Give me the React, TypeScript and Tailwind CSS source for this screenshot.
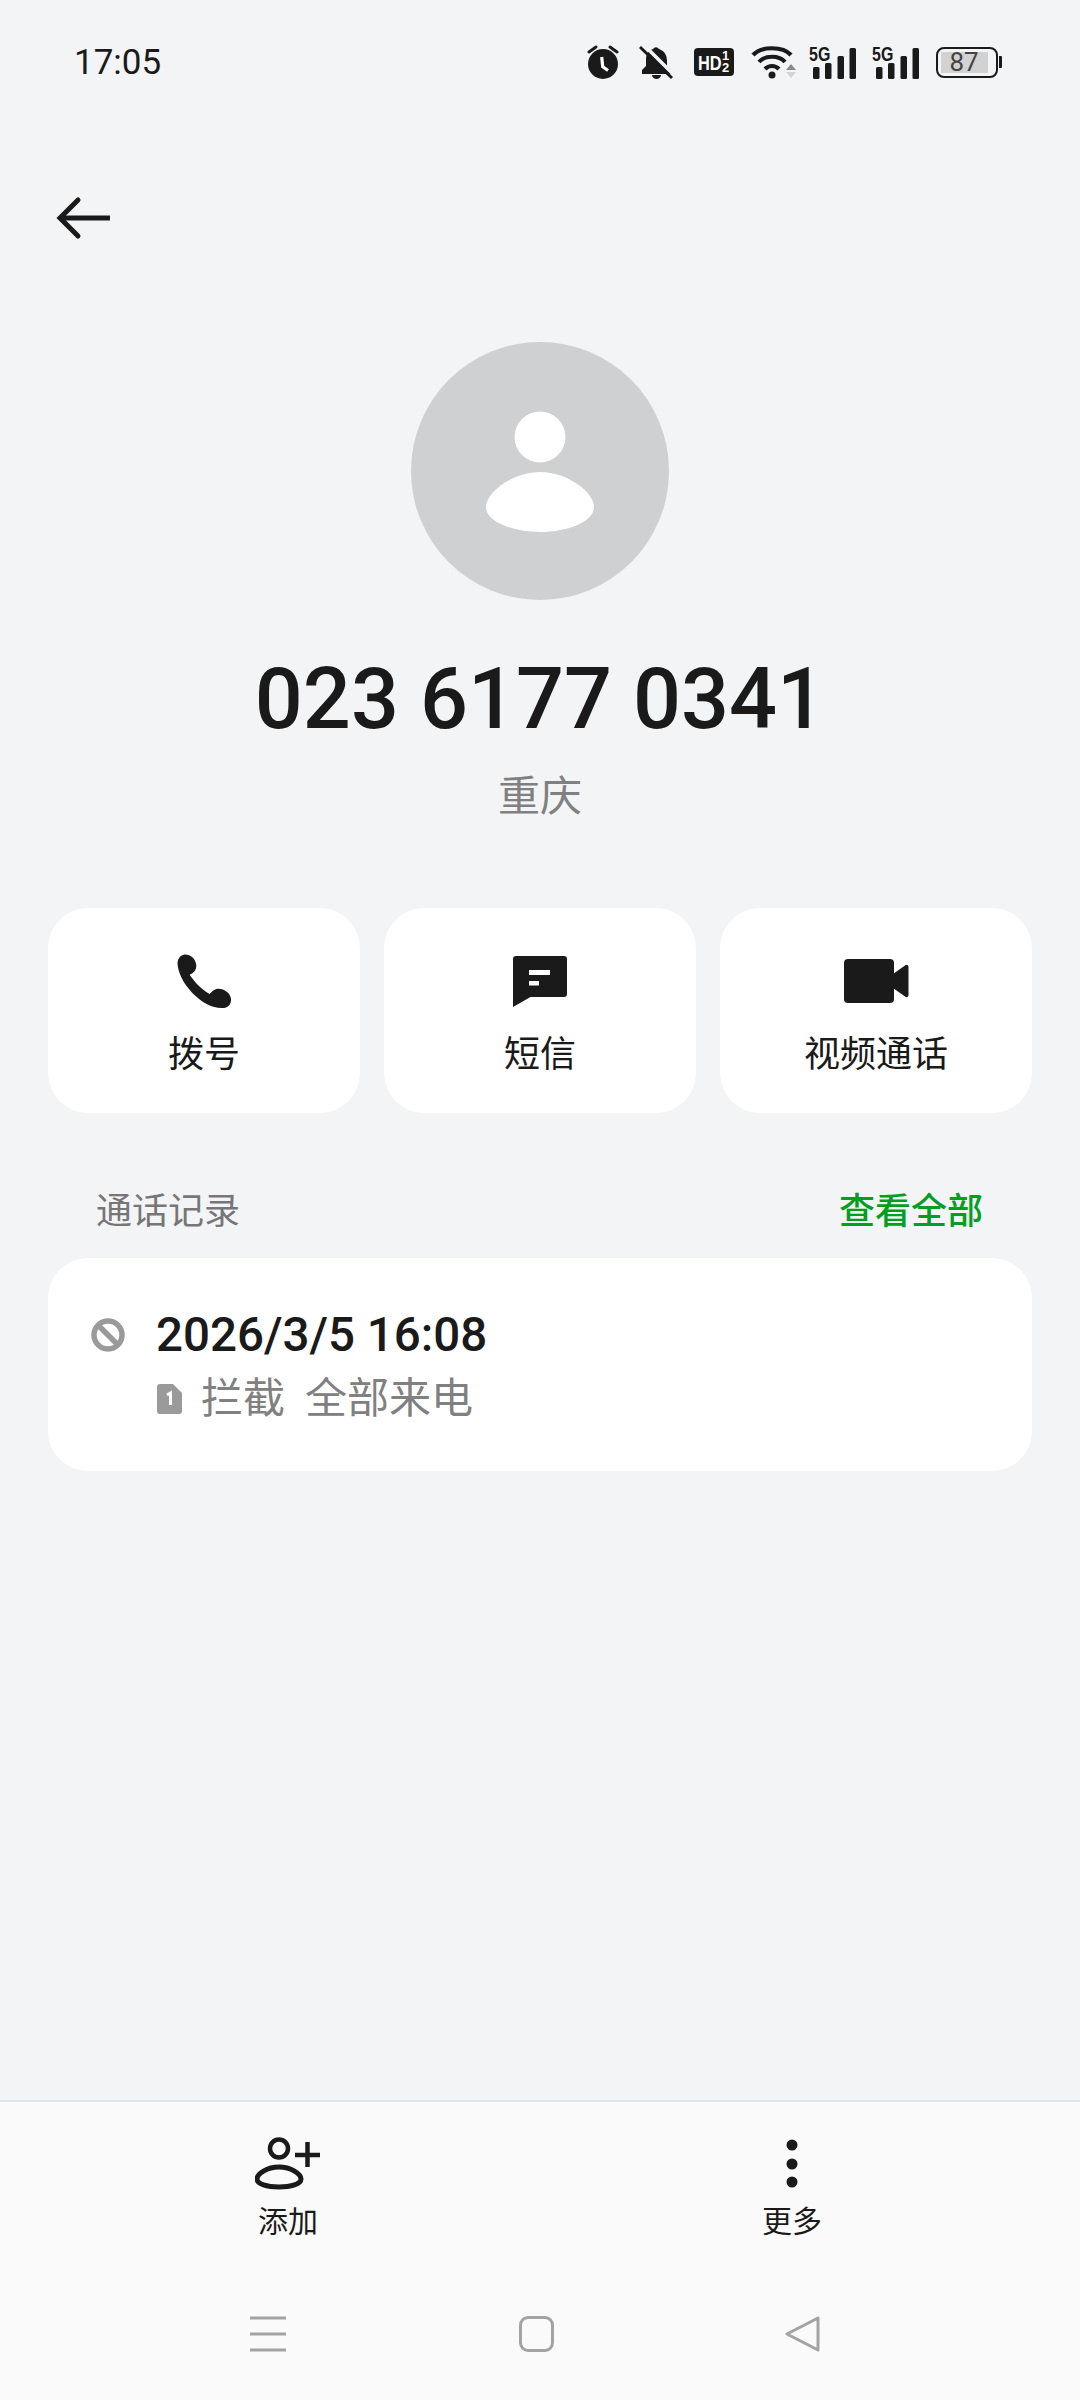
import React from "react";

const INK = "#1a1a1a";

function Alarm() {
  return (
    <svg width="32" height="36" viewBox="0 0 32 36">
      <circle cx="16" cy="20" r="15" fill={INK} />
      <path d="M2 8 L9 3 M30 8 L23 3" stroke={INK} strokeWidth="3" strokeLinecap="round" />
      <path d="M14.700 13 L15.700 22.700 L21 26.500" stroke="#fff" strokeWidth="3.200" fill="none" />
    </svg>
  );
}
function BellOff() {
  return (
    <svg width="34" height="36" viewBox="0 0 34 36">
      <path d="M14 5 a3.500 3.500 0 0 1 6 0 c6 2 8 7 8 12 v5 l4 4 v4 H3 v-4 l4 -4 v-6 c0 -6 2 -9 7 -11z" fill={INK} />
      <path d="M13 31 h9 a4.500 4 0 0 1 -9 0z" fill={INK} />
      <path d="M5 1 L35 31" stroke="#f3f4f6" strokeWidth="3.500" />
      <path d="M1 3 L33 34" stroke={INK} strokeWidth="3" />
    </svg>
  );
}
function HD() {
  return (
    <div className="flex h-[28px] w-[40px] items-center rounded-[4px] bg-[#1a1a1a] pl-[4px] [font-family:'Liberation_Sans',sans-serif] font-bold text-white">
      <span className="w-[23px] origin-left scale-x-[0.78] text-[21px] leading-none">HD</span>
      <span className="flex w-[10px] flex-col items-center text-[13px] leading-[12px]">
        <span>1</span>
        <span>2</span>
      </span>
    </div>
  );
}
function Wifi() {
  return (
    <svg width="46" height="36" viewBox="0 0 46 36">
      <path d="M2 11 C10 2 32 2 40 11" stroke={INK} strokeWidth="4.200" fill="none" />
      <path d="M8 18 C14 11 28 11 34 18" stroke={INK} strokeWidth="4.200" fill="none" />
      <path d="M14 25 C18 21 24 21 28 25" stroke={INK} strokeWidth="4.200" fill="none" />
      <circle cx="21" cy="31" r="3.500" fill={INK} />
      <path d="M35 26 L40 20 L45 26z" fill="#8a8a8a" />
      <path d="M35 28 L40 34 L45 28z" fill="#d4d4d4" />
    </svg>
  );
}
function Signal() {
  return (
    <div className="relative h-[33px] w-[47px]">
      <span className="absolute top-[-3px] left-0 origin-left scale-x-[0.76] text-[21px] leading-[21px] font-bold text-[#1a1a1a] [font-family:'Liberation_Sans',sans-serif]">5G</span>
      <svg width="47" height="33" viewBox="0 0 47 33" className="block">
        <rect x="4" y="21" width="6.500" height="12" rx="1.500" fill={INK} />
        <rect x="16" y="17" width="6.500" height="16" rx="1.500" fill={INK} />
        <rect x="28.500" y="10" width="6.500" height="23" rx="1.500" fill={INK} />
        <rect x="40.500" y="2" width="6.500" height="31" rx="1.500" fill={INK} />
      </svg>
    </div>
  );
}
function Battery() {
  return (
    <div className="flex items-center">
      <div className="flex h-[31px] w-[62px] items-stretch rounded-[8px] border-[2.5px] border-[#1a1a1a] py-[3px] pl-[3px]">
        <div className="flex w-[47px] items-center justify-center bg-[#d2d2d2] text-[26px] leading-none text-[#444] [font-family:Roboto,sans-serif]">87</div>
      </div>
      <div className="ml-[1.500px] h-[12px] w-[3px] rounded-r-[1px] bg-[#1a1a1a]" />
    </div>
  );
}

function Action({ label, icon }: { label: string; icon: React.ReactNode }) {
  return (
    <div className="flex h-[205px] w-[312px] flex-col items-center rounded-[40px] bg-white">
      <div className="mt-[43px] flex h-[60px] items-center justify-center">{icon}</div>
      <div className="mt-[19px] text-[36px] leading-[50px] text-[#1a1a1a]">{label}</div>
    </div>
  );
}

export default function App() {
  return (
    <div className="flex h-[2400px] w-[1080px] flex-col bg-[#f3f4f6] [font-family:Roboto,'Noto_Sans_CJK_SC',sans-serif]">
      <div className="flex h-[124px] items-center justify-between pr-[78px] pl-[74px]">
        <span className="text-[35px] leading-none text-[#1a1a1a]">17:05</span>
        <div className="flex items-center">
          <Alarm />
          <div className="ml-[20px]"><BellOff /></div>
          <div className="ml-[21px]"><HD /></div>
          <div className="ml-[17px]"><Wifi /></div>
          <div className="ml-[12px]"><Signal /></div>
          <div className="ml-[16px]"><Signal /></div>
          <div className="ml-[17px]"><Battery /></div>
        </div>
      </div>

      <div className="pl-[56px]">
        <svg width="58" height="44" viewBox="0 0 58 44" className="mt-[72px] block">
          <path d="M4 22 H54" stroke={INK} strokeWidth="5" />
          <path d="M22 4 L4 22 L22 40" stroke={INK} strokeWidth="5" fill="none" strokeLinecap="round" />
        </svg>
      </div>

      <div className="mt-[102px] flex flex-col items-center">
        <div className="flex h-[258px] w-[258px] items-center justify-center rounded-full bg-[#cfd0d2]">
          <svg width="110" height="122" viewBox="0 0 110 122">
            <circle cx="55" cy="27" r="25.500" fill="#fff" />
            <path d="M55 62 C82 62 109 82 109 97 C109 112 82 122 55 122 C28 122 1 112 1 97 C1 82 28 62 55 62Z" fill="#fff" />
          </svg>
        </div>
        <div className="mt-[46px] text-[84.500px] leading-[108px] font-medium text-[#1a1a1a]">023 6177 0341</div>
        <div className="mt-[13px] text-[42px] leading-[60px] text-[#808080]">重庆</div>
      </div>

      <div className="mt-[81px] flex gap-[24px] px-[48px]">
        <Action
          label="拨号"
          icon={
            <svg width="55" height="55" viewBox="50 38 165 165">
              <path d="M70 40 C58 42 50 55 52 72 C56 105 78 140 110 168 C130 185 155 202 190 200 C205 198 213 188 212 172 C210 155 192 142 175 142 C162 142 155 150 148 158 C128 148 100 120 88 100 C100 95 108 88 108 72 C106 52 90 38 70 40Z" fill={INK} />
            </svg>
          }
        />
        <Action
          label="短信"
          icon={
            <svg width="54" height="51" viewBox="0 0 54 51">
              <path d="M3 0 H51 a3 3 0 0 1 3 3 V38 a3 3 0 0 1 -3 3 H17.500 L0 51 V3 a3 3 0 0 1 3 -3z" fill={INK} />
              <rect x="16" y="14" width="21" height="5" fill="#fff" />
              <rect x="16" y="25" width="10" height="4.500" fill="#fff" />
            </svg>
          }
        />
        <Action
          label="视频通话"
          icon={
            <svg width="65" height="44" viewBox="0 0 65 44">
              <rect x="0" y="0" width="50" height="44" rx="4" fill={INK} />
              <path d="M49 15 L61 6.500 a2 2 0 0 1 3.500 1.500 V36 a2 2 0 0 1 -3.500 1.500 L49 29z" fill={INK} />
            </svg>
          }
        />
      </div>

      <div className="mt-[70px] flex items-center justify-between pr-[97px] pl-[96px]">
        <span className="text-[36px] leading-[58px] text-[#767676]">通话记录</span>
        <span className="text-[36px] leading-[58px] font-medium text-[#00a01e]">查看全部</span>
      </div>

      <div className="mx-[48px] mt-[17px] flex h-[213px] rounded-[40px] bg-white pt-[46px] pl-[43px]">
        <svg width="34" height="34" viewBox="0 0 34 34" className="mt-[14px] shrink-0">
          <circle cx="17" cy="17" r="14" fill="none" stroke="#9a9a9a" strokeWidth="5.500" />
          <path d="M7 7 L27 27" stroke="#9a9a9a" strokeWidth="5.500" />
        </svg>
        <div className="ml-[31px] flex flex-col">
          <div className="text-[47.500px] leading-[62px] font-medium text-[#1a1a1a]">2026/3/5 16:08</div>
          <div className="mt-[4px] flex items-center">
            <svg width="25" height="30" viewBox="0 0 25 30" className="ml-[1px] shrink-0">
              <path d="M3 0 H16 L25 9 V27 a3 3 0 0 1 -3 3 H3 a3 3 0 0 1 -3 -3 V3 a3 3 0 0 1 3 -3z" fill="#9a9a9a" />
              <path d="M10 11 L13.500 9 V21" stroke="#fff" strokeWidth="3" fill="none" />
            </svg>
            <span className="ml-[19px] text-[42px] leading-[58px] text-[#808080]">拦截</span>
            <span className="ml-[20px] text-[42px] leading-[58px] text-[#808080]">全部来电</span>
          </div>
        </div>
      </div>

      <div className="mt-auto flex h-[300px] flex-col border-t-[2px] border-[#e4e4e4] bg-[#fafafa]">
        <div className="flex h-[170px] pt-[35px]">
          <div className="flex w-[576px] flex-col items-center">
            <svg width="66" height="54" viewBox="0 0 66 54" className="block">
              <circle cx="24" cy="11.500" r="9" fill="none" stroke={INK} strokeWidth="4.500" />
              <path d="M24 30 C36 30 46 37 46 42 C46 47 36 50 24 50 C12 50 2 47 2 42 C2 37 12 30 24 30Z" fill="none" stroke={INK} strokeWidth="5" />
              <path d="M40 18 H65 M52.500 5 V30" stroke={INK} strokeWidth="4.500" />
            </svg>
            <div className="mt-[10px] text-[30px] leading-[42px] text-[#1a1a1a]">添加</div>
          </div>
          <div className="flex w-[432px] flex-col items-center">
            <svg width="12" height="54" viewBox="0 0 12 54" className="block">
              <circle cx="6" cy="8" r="5.500" fill={INK} />
              <circle cx="6" cy="27" r="5.500" fill={INK} />
              <circle cx="6" cy="45" r="5.500" fill={INK} />
            </svg>
            <div className="mt-[10px] text-[30px] leading-[42px] text-[#1a1a1a]">更多</div>
          </div>
        </div>
        <div className="flex items-center pt-[44px]">
          <svg width="36" height="36" viewBox="0 0 36 36" className="ml-[250px] block">
            <path d="M0 2 H36 M0 18 H36 M0 34 H36" stroke="#a3a3a3" strokeWidth="3" />
          </svg>
          <div className="ml-[233px] h-[36px] w-[35px] rounded-[9px] border-[3px] border-[#a3a3a3]" />
          <svg width="36" height="36" viewBox="0 0 36 36" className="ml-[231px] block">
            <path d="M33 2 V34 L2 18 L33 2Z" fill="none" stroke="#a3a3a3" strokeWidth="3" strokeLinejoin="round" />
          </svg>
        </div>
      </div>
    </div>
  );
}
